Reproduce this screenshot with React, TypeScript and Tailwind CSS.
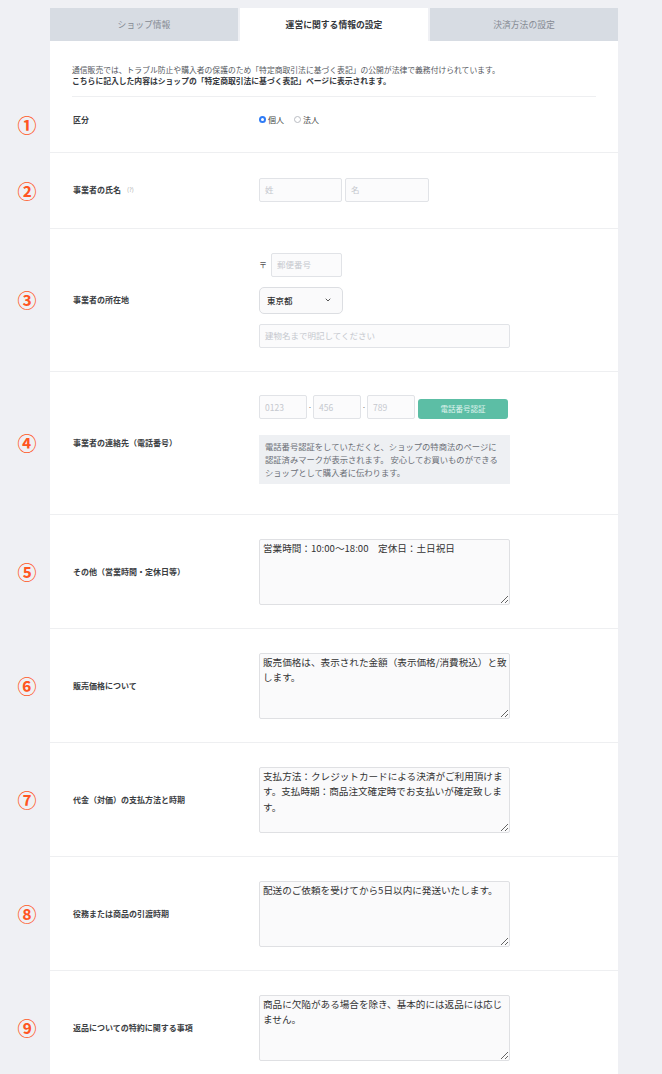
import { ChevronDown } from "lucide-react";

const font = "font-['Noto_Sans_CJK_JP','Noto_Sans',sans-serif]";

function Num({ n }: { n: string }) {
  return (
    <div className="w-[50px] shrink-0 flex items-center justify-center pl-[4px] text-[19px] font-bold leading-none text-[#ff5522]">
      {n}
    </div>
  );
}

function Label({ children }: { children: React.ReactNode }) {
  return (
    <div className="w-[186px] shrink-0 text-[8px] font-bold text-[#3a3d42] flex items-center">
      {children}
    </div>
  );
}

function Box({ text }: { text: string }) {
  return (
    <textarea
      readOnly
      wrap="off"
      value={text}
      className="block w-[251px] h-[66px] bg-[#fafafb] border border-[#dfe0e3] rounded-[2px] px-[3px] pt-[1px] text-[9.6px] leading-[15.5px] text-[#333] whitespace-pre overflow-hidden resize-y outline-none"
    />
  );
}

function Input({ w, ph }: { w: string; ph: string }) {
  return (
    <div
      className={`${w} h-[24px] bg-[#fbfbfc] border border-[#e1e3e7] rounded-[2px] flex items-center px-[5px] text-[8.5px] text-[#c5c8ce]`}
    >
      {ph}
    </div>
  );
}

const areas = [
  { n: "⑤", label: "その他（営業時間・定休日等）", text: "営業時間：10:00〜18:00　定休日：土日祝日" },
  { n: "⑥", label: "販売価格について", text: "販売価格は、表示された金額（表示価格/消費税込）と致\nします。" },
  { n: "⑦", label: "代金（対価）の支払方法と時期", text: "支払方法：クレジットカードによる決済がご利用頂けま\nす。支払時期：商品注文確定時でお支払いが確定致しま\nす。" },
  { n: "⑧", label: "役務または商品の引渡時期", text: "配送のご依頼を受けてから5日以内に発送いたします。" },
  { n: "⑨", label: "返品についての特約に関する事項", text: "商品に欠陥がある場合を除き、基本的には返品には応じ\nません。" },
];

export default function App() {
  return (
    <div className={`h-[1074px] overflow-hidden bg-[#eff0f4] ${font}`}>
      <div className="pt-[8px] pl-[50px]">
        <div className="w-[568px] grid grid-cols-3 gap-[2px] h-[33px] text-[8.8px]">
          <div className="bg-[#d7dce3] flex items-center justify-center text-[#868b93]">ショップ情報</div>
          <div className="bg-white flex items-center justify-center font-bold text-[#33363b]">運営に関する情報の設定</div>
          <div className="bg-[#d7dce3] flex items-center justify-center text-[#868b93]">決済方法の設定</div>
        </div>
      </div>

      <div className="flex">
        <div className="w-[50px] shrink-0" />
        <div className="w-[568px] bg-white px-[22px]">
          <div className="pt-[23px] pb-[10px] border-b border-[#eeeff1] text-[7.8px] leading-[11px] text-[#55585e]">
            <p>通信販売では、トラブル防止や購入者の保護のため「特定商取引法に基づく表記」の公開が法律で義務付けられています。</p>
            <p className="font-bold text-[#33363b]">こちらに記入した内容はショップの「特定商取引法に基づく表記」ページに表示されます。</p>
          </div>
        </div>
      </div>

      <div className="flex">
        <Num n="①" />
        <div className="w-[568px] h-[55px] pb-[10px] bg-white pl-[23px] flex items-center">
          <Label>区分</Label>
          <div className="flex items-center gap-[10px] text-[8px] text-[#444]">
            <span className="flex items-center gap-[2px]">
              <span className="w-[7px] h-[7px] rounded-full bg-[#2f7cf6] flex items-center justify-center">
                <span className="w-[2.5px] h-[2.5px] rounded-full bg-white" />
              </span>
              個人
            </span>
            <span className="flex items-center gap-[2px]">
              <span className="w-[7px] h-[7px] rounded-full border border-[#b9bcc2] bg-white" />
              法人
            </span>
          </div>
        </div>
      </div>

      <div className="flex">
        <Num n="②" />
        <div className="w-[568px] h-[76px] pb-[2px] bg-white border-t border-[#eeeff1] pl-[23px] flex items-center">
          <Label>
            事業者の氏名<span className="ml-[6px] text-[6px] font-normal text-[#aaa]">(?)</span>
          </Label>
          <div className="flex gap-[3px]">
            <Input w="w-[83px]" ph="姓" />
            <Input w="w-[84px]" ph="名" />
          </div>
        </div>
      </div>

      <div className="flex">
        <Num n="③" />
        <div className="w-[568px] h-[143px] bg-white border-t border-[#eeeff1] pl-[23px] flex items-center">
          <Label>事業者の所在地</Label>
          <div className="flex flex-col gap-[10px]">
            <div className="flex items-center gap-[5px]">
              <span className="text-[8px] text-[#555] w-[7px]">〒</span>
              <Input w="w-[71px]" ph="郵便番号" />
            </div>
            <div className="w-[84px] h-[27px] bg-[#fafafb] border border-[#dcdee2] rounded-[5px] flex items-center justify-between pl-[7px] pr-[10px] text-[8.5px] font-medium text-[#333]">
              東京都
              <ChevronDown className="w-[8px] h-[8px] text-[#555]" strokeWidth={3} />
            </div>
            <Input w="w-[251px]" ph="建物名まで明記してください" />
          </div>
        </div>
      </div>

      <div className="flex">
        <Num n="④" />
        <div className="w-[568px] h-[143px] bg-white border-t border-[#eeeff1] pl-[23px] flex items-center">
          <Label>事業者の連絡先（電話番号）</Label>
          <div className="self-start pt-[23px] flex flex-col gap-[16px]">
            <div className="flex items-end">
              <Input w="w-[48px]" ph="0123" />
              <span className="w-[6px] self-center text-center text-[8px] text-[#777]">·</span>
              <Input w="w-[48px]" ph="456" />
              <span className="w-[6px] self-center text-center text-[8px] text-[#777]">·</span>
              <Input w="w-[48px]" ph="789" />
              <div className="ml-[3px] w-[90px] h-[20px] rounded-[3px] bg-[#5cbea5] flex items-center justify-center text-[7.5px] text-[#dff3ed]">
                電話番号認証
              </div>
            </div>
            <div className="w-[251px] h-[49px] bg-[#eef0f3] px-[6px] pt-[5px] text-[8.3px] leading-[13px] text-[#6a6e75]">
              電話番号認証をしていただくと、ショップの特商法のページに
              <br />
              認証済みマークが表示されます。 安心してお買いものができる
              <br />
              ショップとして購入者に伝わります。
            </div>
          </div>
        </div>
      </div>

      {areas.map((a) => (
        <div className="flex" key={a.n}>
          <Num n={a.n} />
          <div className="w-[568px] h-[114px] bg-white border-t border-[#eeeff1] pl-[23px] flex items-center">
            <Label>{a.label}</Label>
            <Box text={a.text} />
          </div>
        </div>
      ))}
    </div>
  );
}
